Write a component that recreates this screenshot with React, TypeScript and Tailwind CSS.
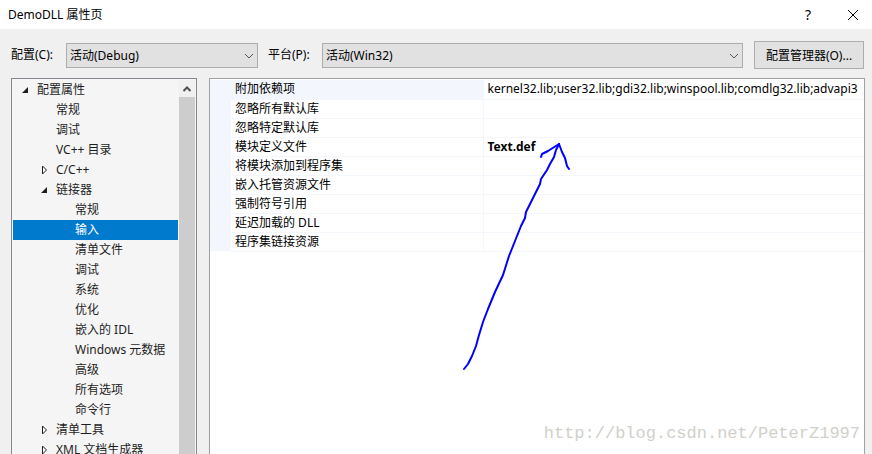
import React from "react";

type TreeNode = {
  label: string;
  level: 0 | 1 | 2;
  state?: "open" | "closed";
  selected?: boolean;
};

const nodes: TreeNode[] = [
  { label: "配置属性", level: 0, state: "open" },
  { label: "常规", level: 1 },
  { label: "调试", level: 1 },
  { label: "VC++ 目录", level: 1 },
  { label: "C/C++", level: 1, state: "closed" },
  { label: "链接器", level: 1, state: "open" },
  { label: "常规", level: 2 },
  { label: "输入", level: 2, selected: true },
  { label: "清单文件", level: 2 },
  { label: "调试", level: 2 },
  { label: "系统", level: 2 },
  { label: "优化", level: 2 },
  { label: "嵌入的 IDL", level: 2 },
  { label: "Windows 元数据", level: 2 },
  { label: "高级", level: 2 },
  { label: "所有选项", level: 2 },
  { label: "命令行", level: 2 },
  { label: "清单工具", level: 1, state: "closed" },
  { label: "XML 文档生成器", level: 1, state: "closed" },
];

const properties: { name: string; value: string; bold?: boolean }[] = [
  {
    name: "附加依赖项",
    value:
      "kernel32.lib;user32.lib;gdi32.lib;winspool.lib;comdlg32.lib;advapi3",
  },
  { name: "忽略所有默认库", value: "" },
  { name: "忽略特定默认库", value: "" },
  { name: "模块定义文件", value: "Text.def", bold: true },
  { name: "将模块添加到程序集", value: "" },
  { name: "嵌入托管资源文件", value: "" },
  { name: "强制符号引用", value: "" },
  { name: "延迟加载的 DLL", value: "" },
  { name: "程序集链接资源", value: "" },
];

const indent = { 0: "pl-2", 1: "pl-[27px]", 2: "pl-12" };

function Expander({ state }: { state?: "open" | "closed" }) {
  return (
    <svg className="h-3 w-3 shrink-0" viewBox="0 0 12 12" aria-hidden="true">
      {state === "open" && <path d="M7 3v6H1z" fill="#1e1e1e" />}
      {state === "closed" && (
        <path d="M2.5 2v8l4-4z" fill="#fff" stroke="#1e1e1e" />
      )}
    </svg>
  );
}

function Combo({ id, options }: { id: string; options: string[] }) {
  return (
    <div className="relative">
      <select
        id={id}
        className="block h-[25px] w-full appearance-none border border-[#adadad] bg-[#e1e1e1] pl-[3px] pr-6 pt-px text-black"
      >
        {options.map((o) => (
          <option key={o}>{o}</option>
        ))}
      </select>
      <svg
        className="pointer-events-none absolute right-1 top-2 h-2.5 w-2.5"
        viewBox="0 0 10 10"
        fill="none"
        stroke="#555"
        aria-hidden="true"
      >
        <path d="M1 3l4 4 4-4" />
      </svg>
    </div>
  );
}

export default function App() {
  return (
    <div className="flex h-screen flex-col overflow-hidden bg-[#f0f0f0] font-['Noto_Sans','Noto_Sans_CJK_SC',sans-serif] text-xs text-black">
      <header className="flex h-[29px] shrink-0 items-center bg-white pl-2 pr-3">
        <h1 className="flex-1">DemoDLL 属性页</h1>
        <button aria-label="帮助" className="mr-[30px] flex h-5 w-4 items-center justify-center text-sm">
          ?
        </button>
        <button aria-label="关闭" className="flex h-5 w-3.5 items-center justify-center">
          <svg className="h-3 w-3" viewBox="0 0 12 12" stroke="#000" aria-hidden="true">
            <path d="M1 1l10 10M11 1L1 11" />
          </svg>
        </button>
      </header>

      <div className="flex h-[49px] shrink-0 items-center pl-[11px] pr-2 pt-[3px]">
        <label htmlFor="config" className="w-[55px] shrink-0">
          配置(C):
        </label>
        <div className="w-48 shrink-0">
          <Combo id="config" options={["活动(Debug)", "Release"]} />
        </div>
        <label htmlFor="platform" className="ml-2.5 w-[54px] shrink-0">
          平台(P):
        </label>
        <div className="flex-1">
          <Combo id="platform" options={["活动(Win32)", "x64"]} />
        </div>
        <button className="ml-[11px] h-7 w-[110px] shrink-0 border border-[#adadad] bg-[#e1e1e1] pt-px">
          配置管理器(O)...
        </button>
      </div>

      <main className="flex min-h-0 flex-1 gap-3 pl-[11px] pr-[7px]">
        <nav className="flex w-[186px] shrink-0 overflow-hidden border border-b-0 border-[#828790] bg-[#f5f5f5] px-px pt-px text-[#1e1e1e]">
          <ul className="min-w-0 flex-1">
            {nodes.map((n, i) => (
              <li key={i}>
                <button
                  className={`flex h-5 w-full items-center gap-1 whitespace-nowrap text-left ${indent[n.level]} ${
                    n.selected ? "bg-[#007acc] text-white" : ""
                  }`}
                >
                  {n.level === 2 ? (
                    <span className="pl-3.5">{n.label}</span>
                  ) : (
                    <>
                      <Expander state={n.state} />
                      {n.label}
                    </>
                  )}
                </button>
              </li>
            ))}
          </ul>
          <div className="ml-px flex w-4 flex-col bg-[#cdcdcd]">
            <button aria-label="向上滚动" className="flex h-[17px] items-center justify-center bg-[#f0f0f0]">
              <svg className="h-2.5 w-2.5" viewBox="0 0 10 10" fill="none" stroke="#505050" strokeWidth="2" aria-hidden="true">
                <path d="M1.5 7L5 3.5 8.5 7" />
              </svg>
            </button>
          </div>
        </nav>

        <section className="relative min-w-0 flex-1 overflow-hidden border border-b-0 border-[#a0a0a0] bg-white pt-px">
          <table className="w-full table-fixed border-collapse">
            <colgroup>
              <col className="w-[21px]" />
              <col className="w-[252px]" />
              <col />
            </colgroup>
            <tbody>
              {properties.map((p, i) => (
                <tr key={p.name} className="h-[19px]">
                  <td className="bg-[#f3f7fd] p-0" />
                  <th
                    scope="row"
                    className={`border-b border-r border-[#f3f7fd] py-0 pl-1 pr-0 text-left font-normal ${
                      i === 0 ? "bg-[#f3f7fd]" : ""
                    }`}
                  >
                    {p.name}
                  </th>
                  <td
                    className={`overflow-hidden whitespace-nowrap border-b border-[#f3f7fd] py-0 pl-1 pr-0 ${
                      p.bold ? "font-bold" : ""
                    }`}
                  >
                    {p.value}
                  </td>
                </tr>
              ))}
            </tbody>
          </table>
          <svg
            className="pointer-events-none absolute left-[240px] top-[51px] h-[250px] w-[140px]"
            viewBox="0 0 140 250"
            fill="none"
            stroke="#0000ff"
            strokeWidth="2"
            strokeLinecap="round"
            strokeLinejoin="round"
            aria-hidden="true"
          >
            <path d="M14 239L18 234 22 226 26 216 29 205 33 192 38 179 45 162 53 145 59 126 65 111 71 96 75 88 76 82 80 74 84 66 90 54 91 49 97 40 100 34 104 27 106 20 109 14" />
            <path d="M91 27L92 24 98 21 109 14 112 22 115 28 117 36 119 39" />
          </svg>
          <p className="absolute bottom-2 right-1 font-['Liberation_Mono',monospace] text-[17px] leading-6 text-[#d0d0cb]">
            http://blog.csdn.net/PeterZ1997
          </p>
        </section>
      </main>
    </div>
  );
}
